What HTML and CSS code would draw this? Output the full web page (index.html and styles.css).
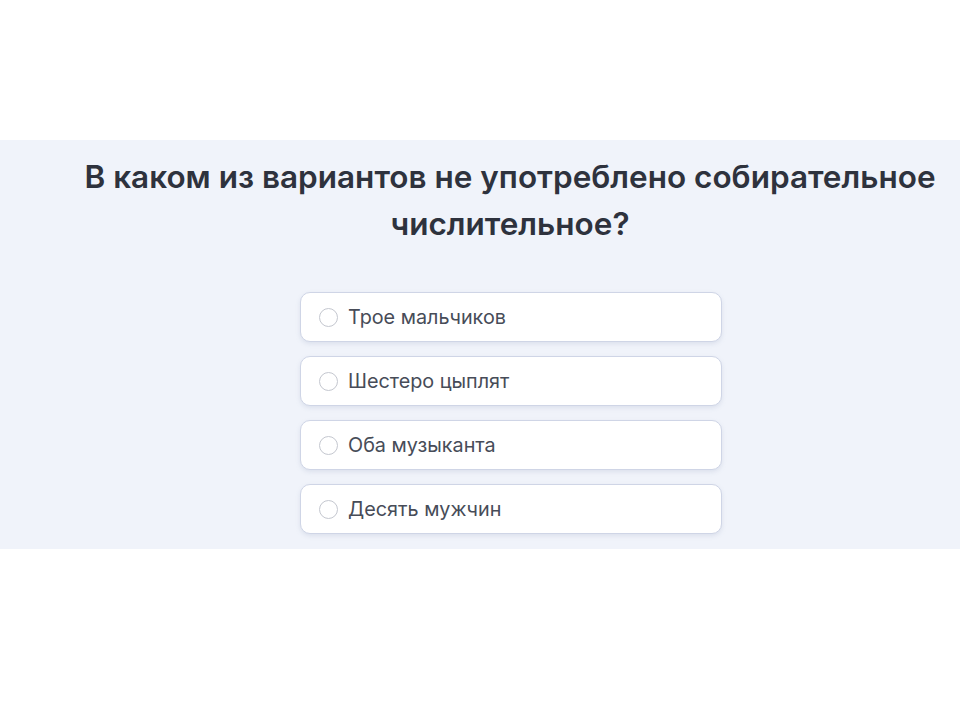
FILE: index.html
```html
<!DOCTYPE html>
<html lang="ru">
<head>
<meta charset="utf-8">
<link rel="stylesheet" href="styles.css">
</head>
<body>
<div class="top"></div>
<section class="quiz">
  <h1 class="question">В каком из вариантов не употреблено собирательное числительное?</h1>
  <ul class="options">
    <li class="option"><span class="radio"></span><span class="label">Трое мальчиков</span></li>
    <li class="option"><span class="radio"></span><span class="label">Шестеро цыплят</span></li>
    <li class="option"><span class="radio"></span><span class="label">Оба музыканта</span></li>
    <li class="option"><span class="radio"></span><span class="label">Десять мужчин</span></li>
  </ul>
</section>
</body>
</html>
```

FILE: styles.css
```css
html, body {
  margin: 0;
  padding: 0;
  background: #ffffff;
  font-family: Inter, "Noto Sans", sans-serif;
}
.top {
  height: 140px;
}
.quiz {
  background: #f0f3fa;
  height: 409px;
  box-sizing: border-box;
  padding-top: 13px;
}
.question {
  margin: 0 0 0 70px;
  width: 880px;
  text-align: center;
  font-size: 31.5px;
  font-weight: 600;
  line-height: 47px;
  color: #2e323d;
  letter-spacing: 0;
}
.options {
  list-style: none;
  margin: 45px 0 0 300px;
  padding: 0;
  width: 422px;
  display: flex;
  flex-direction: column;
  gap: 14px;
}
.option {
  height: 50px;
  box-sizing: border-box;
  background: #ffffff;
  border: 1px solid #cfd5e6;
  border-radius: 10px;
  box-shadow: 0 2px 4px rgba(160, 170, 200, 0.25);
  display: flex;
  align-items: center;
  padding-left: 18px;
}
.radio {
  width: 19px;
  height: 19px;
  border: 1px solid #c4c7cf;
  border-radius: 50%;
  box-sizing: border-box;
  margin-right: 10px;
  flex: none;
}
.label {
  font-size: 19.8px;
  color: #474c58;
}
```
